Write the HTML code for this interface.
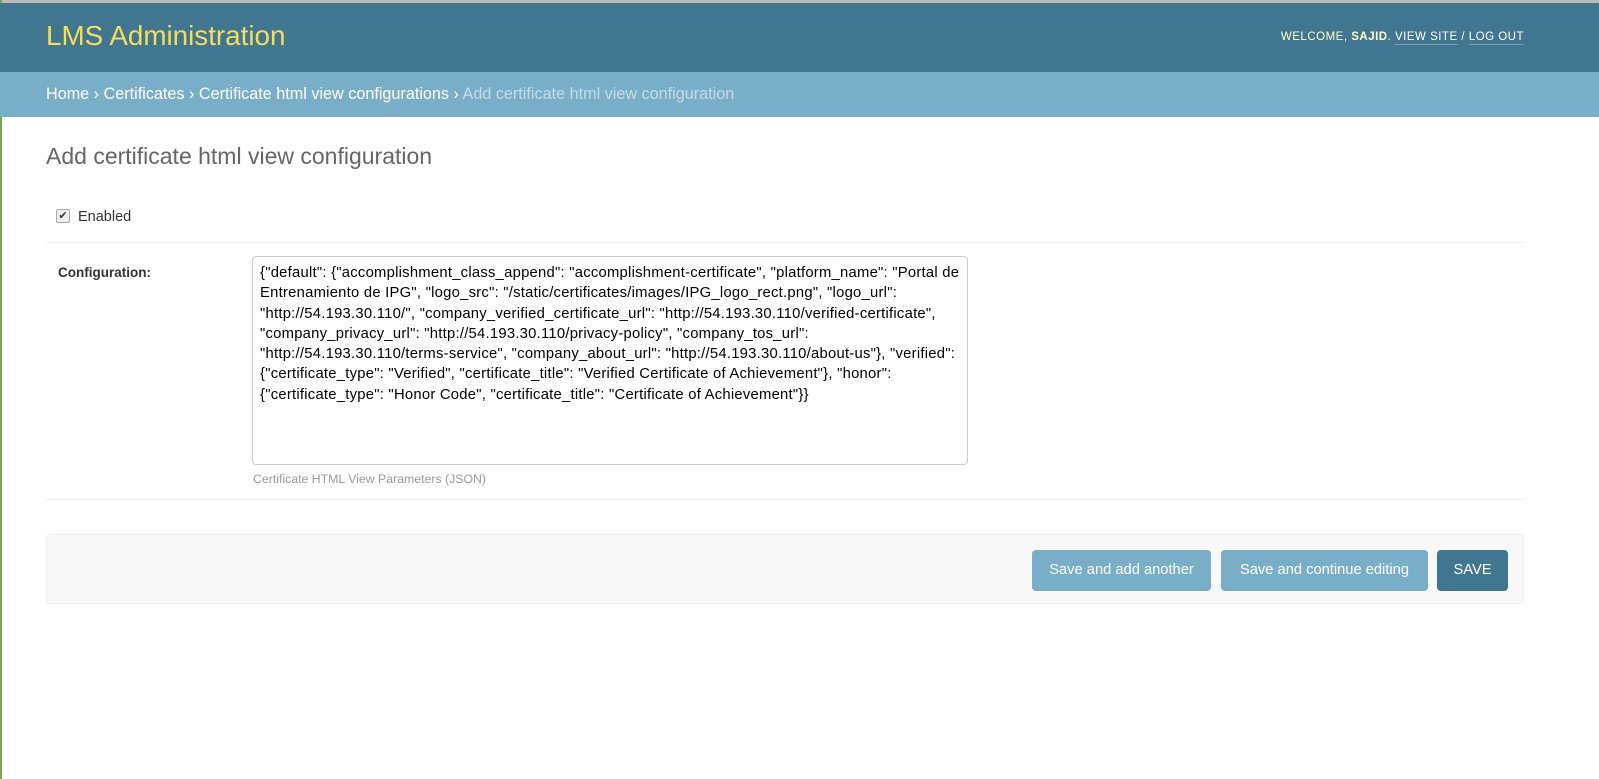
<!DOCTYPE html>
<html><head><meta charset="utf-8"><style>
*{box-sizing:border-box}
body{margin:0;width:1599px;height:779px;background:#fff;font-family:"Liberation Sans",sans-serif;position:relative;overflow:hidden}
.topb{position:absolute;left:0;top:0;width:1599px;height:3px;background:#bbb}
.leftb{position:absolute;left:0;top:0;width:2px;height:779px;background:#79a55a}
#header{position:absolute;left:0;top:3px;width:1599px;height:69px;background:#417690}
#header .brand{position:absolute;left:46px;top:17px;font-size:27.8px;color:#f5dd5d;font-weight:300}
#header .tools{position:absolute;right:75px;top:28px;font-size:11.5px;color:#ffc;letter-spacing:0.5px}
#header .tools b{color:#ffc}
#header .tools u{text-decoration:none;border-bottom:1px solid rgba(255,255,255,.3);color:#fff;padding-bottom:1px}
.bc{position:absolute;left:0;top:72px;width:1599px;height:45px;background:#79aec8;color:#fff;font-size:16.2px;padding:13px 46px}
.bc span{color:#c4dce8}
h1{position:absolute;left:46px;top:143px;margin:0;font-size:23px;font-weight:300;color:#666}
.cb{position:absolute;left:56px;top:209px;width:14px;height:14px;border:1px solid #aaa;border-radius:2px;background:#eee;font-size:11px;line-height:12px;text-align:center;color:#333}
.en{position:absolute;left:78px;top:209px;font-size:14.5px;color:#333}
.hr{position:absolute;left:46px;width:1478px;height:1px;background:#eee}
.lab{position:absolute;left:58px;top:265px;font-size:13.5px;font-weight:bold;color:#333}
.ta{position:absolute;left:252px;top:256px;width:716px;height:209px;border:1px solid #ccc;border-radius:4px;padding:6px 7px;font-size:14.8px;line-height:20.3px;color:#000;letter-spacing:0.25px;white-space:nowrap;overflow:hidden}
.help{position:absolute;left:253px;top:472px;font-size:12.3px;color:#999}
.sub{position:absolute;left:46px;top:534px;width:1478px;height:70px;background:#f8f8f8;border:1px solid #eee;border-radius:4px}
.btn{position:absolute;top:15px;height:41px;border-radius:4px;background:#79aec8;color:#fff;font-size:14.7px;text-align:center;line-height:41px}
</style></head><body>
<div class="topb"></div><div class="leftb"></div>
<div id="header"><div class="brand">LMS Administration</div>
<div class="tools">WELCOME, <b>SAJID</b>. <u>VIEW SITE</u> / <u>LOG OUT</u></div></div>
<div class="bc">Home › Certificates › Certificate html view configurations › <span>Add certificate html view configuration</span></div>
<h1>Add certificate html view configuration</h1>
<div class="cb">✔</div><div class="en">Enabled</div>
<div class="hr" style="top:242px"></div>
<div class="lab">Configuration:</div>
<div class="ta">{"default": {"accomplishment_class_append": "accomplishment-certificate", "platform_name": "Portal de<br>Entrenamiento de IPG", "logo_src": "/static/certificates/images/IPG_logo_rect.png", "logo_url":<br>"http://54.193.30.110/", "company_verified_certificate_url": "http://54.193.30.110/verified-certificate",<br>"company_privacy_url": "http://54.193.30.110/privacy-policy", "company_tos_url":<br>"http://54.193.30.110/terms-service", "company_about_url": "http://54.193.30.110/about-us"}, "verified":<br>{"certificate_type": "Verified", "certificate_title": "Verified Certificate of Achievement"}, "honor":<br>{"certificate_type": "Honor Code", "certificate_title": "Certificate of Achievement"}}</div>
<div class="help">Certificate HTML View Parameters (JSON)</div>
<div class="hr" style="top:499px"></div>
<div class="sub">
<div class="btn" style="left:985px;width:179px">Save and add another</div>
<div class="btn" style="left:1174px;width:207px">Save and continue editing</div>
<div class="btn" style="left:1390px;width:71px;background:#417690">SAVE</div>
</div>
</body></html>
